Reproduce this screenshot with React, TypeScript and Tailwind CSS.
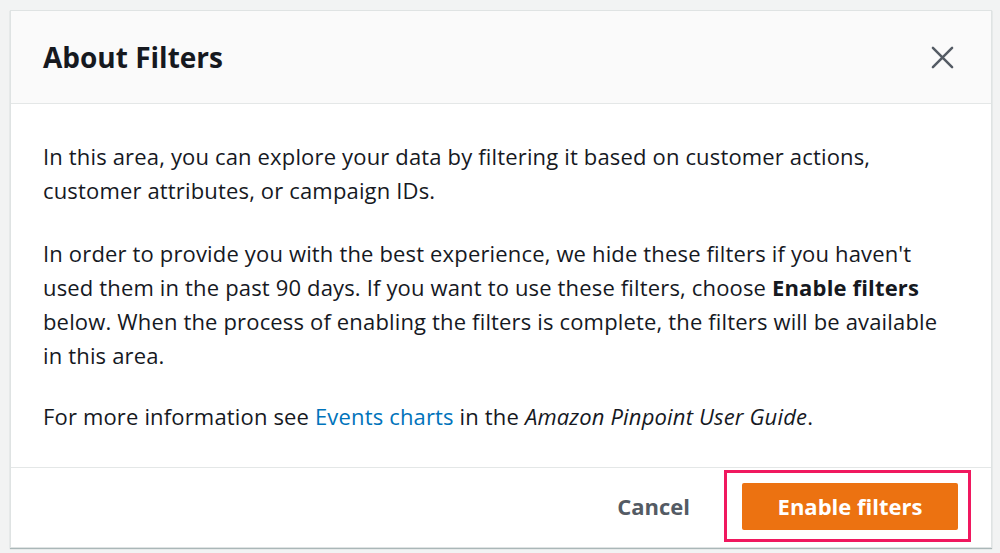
import React from "react";

export default function App() {
  return (
    <div
      className="w-[1000px] h-[553px] bg-[#f2f3f3] pt-[10px] pl-[10px] overflow-hidden"
      style={{ fontFamily: '"Open Sans", "Noto Sans", sans-serif' }}
    >
      <div className="w-[982px] h-[538px] bg-white border border-[#dfe3e3] shadow-[0_1px_1px_#aab7b8] flex flex-col">
        <div className="h-[93px] bg-[#fafafa] border-b border-[#e4e7e7] pl-[32px] pr-[37px] flex items-center justify-between">
          <h1 className="text-[28px] font-bold text-[#16191f] tracking-[0px]">About Filters</h1>
          <svg width="23" height="23" viewBox="0 0 24 24" className="text-[#545b64]">
            <path d="M2 2 L22 22 M22 2 L2 22" stroke="currentColor" strokeWidth="2.6" strokeLinecap="round" />
          </svg>
        </div>
        <div className="flex-1 pl-[32px] pr-[30px] pt-[35px] text-[22px] leading-[34px] tracking-[0.16px] text-[#16191f]">
          <p>
            In this area, you can explore your data by filtering it based on customer actions,
            <br />
            customer attributes, or campaign IDs.
          </p>
          <p className="mt-[29px]">
            In order to provide you with the best experience, we hide these filters if you haven't
            <br />
            used them in the past 90 days. If you want to use these filters, choose <b>Enable filters</b>
            <br />
            below. When the process of enabling the filters is complete, the filters will be available
            <br />
            in this area.
          </p>
          <p className="mt-[27px]">
            For more information see <span className="text-[#0073bb]">Events charts</span> in the{" "}
            <i>Amazon Pinpoint User Guide</i>.
          </p>
        </div>
        <div className="h-[80px] border-t border-[#e4e7e7] flex items-start justify-end pr-[20px] pt-[2px]">
          <div className="flex items-center h-[72px]">
            <span className="text-[22px] font-bold text-[#545b64] mr-[34px]">Cancel</span>
            <div className="border-[3px] border-[#f0185f] pl-[15px] pr-[10px] pt-[10px] pb-[9px]">
              <div className="w-[216px] h-[47px] rounded-[2px] bg-[#ec7211] flex items-center justify-center text-white text-[22px] font-bold">
                Enable filters
              </div>
            </div>
          </div>
        </div>
      </div>
    </div>
  );
}
